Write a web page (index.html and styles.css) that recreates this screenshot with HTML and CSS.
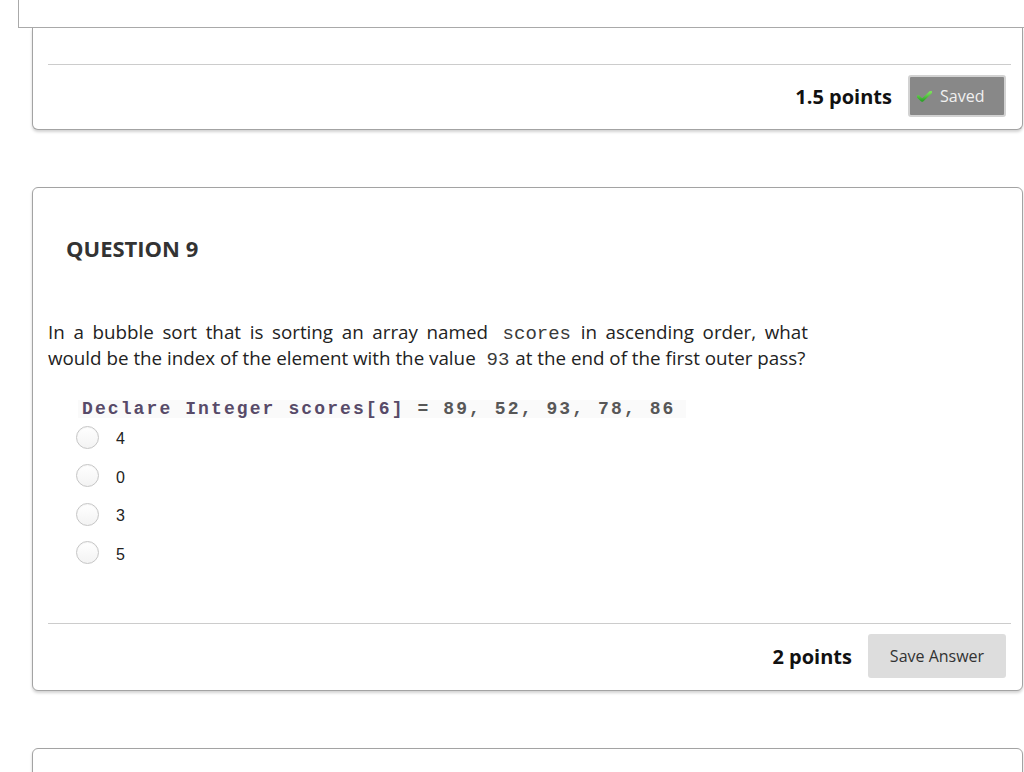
FILE: index.html
```html
<!DOCTYPE html>
<html lang="en">
<head>
<meta charset="utf-8">
<title>Question 9</title>
<link rel="stylesheet" href="styles.css">
</head>
<body>
<div class="topbox"></div>

<div class="card card-first">
  <div class="card-foot">
    <span class="points">1.5 points</span>
    <button class="btn btn-saved" type="button">
      <svg class="check" width="15" height="11" viewBox="0 0 15 11" aria-hidden="true">
        <defs>
          <linearGradient id="g" x1="0" y1="0" x2="0" y2="1">
            <stop offset="0" stop-color="#7be05a"/>
            <stop offset="1" stop-color="#2fa52a"/>
          </linearGradient>
        </defs>
        <path d="M1.2 5.6 L5.2 9.4 L13.8 1.2" fill="none" stroke="url(#g)" stroke-width="3" stroke-linecap="round" stroke-linejoin="round"/>
      </svg>
      <span>Saved</span>
    </button>
  </div>
</div>

<div class="card">
  <h3 class="qtitle">QUESTION 9</h3>
  <p class="qtext"><span class="qline">In a bubble sort that is sorting an array named <code class="ic">scores</code> in ascending order, what</span> would be the index of the element with the value <code class="ic">93</code> at the end of the first outer pass?</p>
  <div class="codeline"><span class="kw">Declare Integer scores[6]</span> <span class="num">= 89, 52, 93, 78, 86</span></div>
  <ul class="options">
    <li class="opt"><span class="radio"></span><span class="lbl">4</span></li>
    <li class="opt"><span class="radio"></span><span class="lbl">0</span></li>
    <li class="opt"><span class="radio"></span><span class="lbl">3</span></li>
    <li class="opt"><span class="radio"></span><span class="lbl">5</span></li>
  </ul>
  <div class="card-foot">
    <span class="points">2 points</span>
    <button class="btn btn-save" type="button">Save Answer</button>
  </div>
</div>

<div class="card card-last"></div>
</body>
</html>
```
FILE: styles.css
```css
html, body {
  margin: 0;
  padding: 0;
  overflow: hidden;
  background: #ffffff;
}

body {
  font-family: "Open Sans", "Liberation Sans", sans-serif;
  color: #222;
}

.topbox {
  height: 27px;
  margin-left: 18px;
  margin-right: -20px;
  border-left: 1px solid #aaaaaa;
  border-bottom: 1px solid #aaaaaa;
  background: #fff;
}

.card {
  margin: 57px 1px 0 32px;
  border: 1px solid #a3a3a3;
  border-radius: 6px;
  background: #fff;
  box-shadow: 0 2px 3px rgba(0, 0, 0, 0.18);
  padding: 0 11px 12px 15px;
}

.card-first {
  margin-top: 0;
  border-top: none;
  border-radius: 0 0 6px 6px;
  padding-top: 36px;
}

.card-last {
  height: 120px;
}

.card-foot {
  display: flex;
  justify-content: flex-end;
  align-items: center;
  gap: 16px;
  border-top: 1px solid #cccccc;
  padding: 10px 5px 0 0;
}

.points {
  font-size: 20px;
  font-weight: 700;
  color: #111;
}

.btn {
  font-family: "Open Sans", "Liberation Sans", sans-serif;
  font-size: 16px;
  border-radius: 3px;
  cursor: pointer;
  display: flex;
  align-items: center;
}

.btn-saved {
  width: 98px;
  height: 42px;
  background: #888888;
  border: 2px solid #d2d2d2;
  color: #f0f0f0;
  padding: 0 0 0 7px;
  gap: 8px;
}

.check {
  display: block;
  margin-top: 1px;
}

.btn-save {
  width: 138px;
  height: 44px;
  background: #dddddd;
  border: none;
  color: #333;
  justify-content: center;
  padding: 0;
}

.qtitle {
  margin: 45px 0 0 18px;
  font-size: 22px;
  line-height: 30px;
  font-weight: 700;
  color: #333;
}

.qtext {
  margin: 56px 0 0 0;
  width: 760px;
  font-size: 18.8px;
  line-height: 26px;
  white-space: nowrap;
  color: #222;
}

.qline {
  display: block;
  text-align: justify;
  text-align-last: justify;
}

.ic {
  font-family: "Liberation Mono", "DejaVu Sans Mono", monospace;
  font-size: 19px;
  line-height: 1;
  color: #3a3a3a;
  padding: 0 1px 0 6px;
}

.codeline {
  margin: 29px 0 0 30px;
  width: 604px;
  padding-left: 4px;
  background: #fafafa;
  font-family: "Liberation Mono", "DejaVu Sans Mono", monospace;
  font-size: 18px;
  font-weight: 700;
  line-height: 18px;
  letter-spacing: 2.1px;
  white-space: pre;
}

.kw {
  color: #574a68;
}

.num {
  color: #575757;
}

.options {
  list-style: none;
  margin: 0 0 51px 28px;
  padding: 0;
}

.opt {
  display: flex;
  align-items: center;
  height: 38.5px;
}

.radio {
  width: 21px;
  height: 21px;
  border-radius: 50%;
  border: 1px solid #c6c6c6;
  background: linear-gradient(#ffffff, #f3f3f3);
  box-shadow: inset 0 1px 1px rgba(0, 0, 0, 0.04);
  flex: none;
}

.lbl {
  margin-left: 17px;
  margin-top: 4px;
  font-family: "Liberation Sans", Arial, sans-serif;
  font-size: 16px;
  color: #222;
}
```
